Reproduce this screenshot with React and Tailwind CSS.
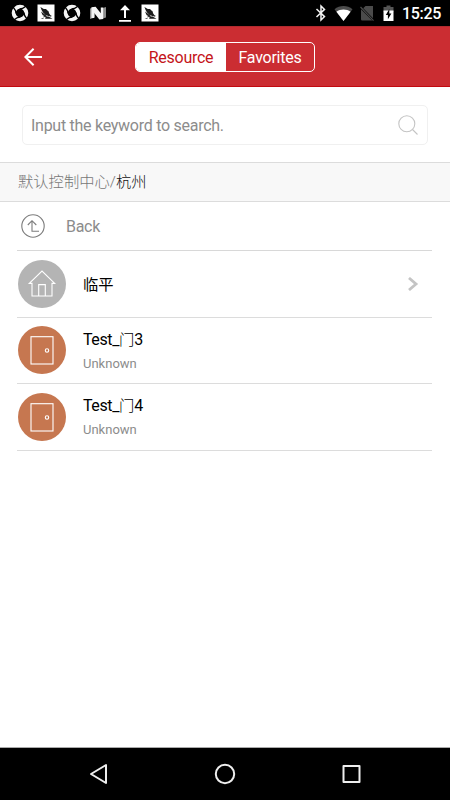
import React, { useState } from 'react';

const SwirlIcon = () => (
    <svg width="18" height="18" viewBox="0 0 18 18">
        <circle cx="9" cy="9" r="6.3" stroke="#f4f4f4" strokeWidth="4" fill="none" />
        <path d="M5 9.5C5 6 3.8 5 2 3M8.5 5C12 5 13 3.8 15 2M13 8.5C13 12 14.2 13 16 15M9.5 13C6 13 5 14.2 3 16" stroke="#000" strokeWidth="1.3" fill="none" />
    </svg>
);

const BirdIcon = () => (
    <svg width="18" height="18" viewBox="0 0 18 18">
        <rect x="0.5" y="0.5" width="17" height="17" fill="#fff" />
        <path d="m3.4 3 3.4 2L9 5l1.4 1.6 1 .5.8 2.3 1.6 2.4-1.6.4L8.6 11 6 8.4 4.6 6ZM4 7.4l2.6 2.2L10 12.2l-2 .2-2.6-1.6ZM5.4 11.8l6.1.8 4 2.2H8l.8-1.2ZM3.6 14.4l4-.9-1.6 1.3Z" fill="#1c1c1c" />
        <path d="m12.4 10.8 2.6 1.2-2 .8Z" fill="#333" />
    </svg>
);

const NougatIcon = () => (
    <svg width="18" height="18" viewBox="0 0 18 18">
        <path d="M1 4.5 6 3v10.5L1 15ZM12 4.5 17 3v10.5L12 15Z" fill="#8c8c8c" />
        <path d="M2.4 3.2 6.6 2.8l5.2 6.4V3.6h2.4V15l-3.8.4L5 8.8V14H2.4Z" fill="#f4f4f4" />
    </svg>
);

const UploadIcon = () => (
    <svg width="18" height="18" viewBox="0 0 18 18">
        <path d="M10 1 15 6.3h-4V14H9V6.3H5ZM4 16h12v1.7H4Z" fill="#fff" />
    </svg>
);

const BluetoothIcon = () => (
    <svg width="12" height="18" viewBox="0 0 12 18">
        <path d="m1.5 5 8 7.6L6 16V2l3.5 3.4-8 7.6" stroke="#f2f2f2" strokeWidth="1.5" fill="none" />
    </svg>
);

const WifiIcon = () => (
    <svg width="19" height="18" viewBox="0 0 19 18">
        <path d="M9.5 17 .5 5.2C5.5.8 13.5.8 18.5 5.2Z" fill="#4b4b4b" />
        <path d="M9.5 17 2.4 7.8c3.8-3.2 10.4-3.2 14.2 0Z" fill="#fff" />
    </svg>
);

const NoSimIcon = () => (
    <svg width="14" height="18" viewBox="0 0 14 18">
        <path d="M5.5 2H13v12.2L3.2 4.2ZM1 5.2 12.2 16.5H2.2Q1 16.5 1 15.3Z" fill="#4b4b4b" />
        <path d="m.5 3 13 13.6" stroke="#4b4b4b" strokeWidth="1.2" />
    </svg>
);

const BatteryIcon = () => (
    <svg width="11" height="18" viewBox="0 0 11 18">
        <path d="M.5 3h3V1.5h4V3h3v5H.5Z" fill="#555" />
        <path d="M.5 6.5h10V17H.5Z" fill="#fff" />
        <path d="M6.3 5 2.8 11h2.1v4.2L8.4 9.4H6.3Z" fill="#000" />
    </svg>
);

const HouseIcon = () => (
    <svg width="48" height="48" viewBox="0 0 48 48" fill="none" stroke="#fff" strokeWidth="1.1">
        <path d="M11.3 23.4 24 11l12.7 12.4H34V36H14V23.4Z" />
        <path d="M20.7 36V24.6h6.6V36" />
    </svg>
);

const DoorIcon = () => (
    <svg width="48" height="48" viewBox="0 0 48 48" fill="none" stroke="#fff" strokeWidth="1.1">
        <rect x="13" y="10.7" width="22" height="27.3" />
        <circle cx="29" cy="24.5" r="1.7" />
    </svg>
);

const StatusBar = () => (
    <div className="flex h-[26px] items-center justify-between bg-black pl-[11px] pr-[9px]">
        <div className="flex gap-2">
            <SwirlIcon />
            <BirdIcon />
            <SwirlIcon />
            <NougatIcon />
            <UploadIcon />
            <BirdIcon />
        </div>
        <div className="flex items-center">
            <BluetoothIcon />
            <span className="ml-[7px]"><WifiIcon /></span>
            <span className="ml-[7px]"><NoSimIcon /></span>
            <span className="ml-[9px]"><BatteryIcon /></span>
            <span className="ml-2 w-[39px] whitespace-nowrap pt-px text-base font-medium leading-[26px] tracking-[-0.3px] text-white">15:25</span>
        </div>
    </div>
);

const items = [
    { id: 1, name: '', suffix: '临平', type: 'area' },
    { id: 2, name: 'Test_', suffix: '门', number: 3, type: 'door', status: 'Unknown' },
    { id: 3, name: 'Test_', suffix: '门', number: 4, type: 'door', status: 'Unknown' },
];

const App = () => {
    const [activeTab, setActiveTab] = useState('resource');

    return (
        <div className="flex h-[800px] w-[450px] flex-col overflow-hidden bg-white font-['Roboto','Noto_Sans_CJK_SC',sans-serif]">
            <StatusBar />

            <header className="flex h-[61px] items-center border-b border-t border-b-[#c20a10] border-t-[#b02a2e] bg-[#cb2d32]">
                <button className="ml-6 w-[111px]">
                    <svg width="19" height="18" viewBox="0 0 19 18" fill="none" stroke="#fff" strokeWidth="2">
                        <path d="M18 9H1.5M9.6.8 1.4 9l8.2 8.2" />
                    </svg>
                </button>
                <div className="flex h-[30px] w-[180px] overflow-hidden rounded-[5px] border border-white text-base leading-[26px] tracking-[-0.25px]">
                    <button
                        onClick={() => setActiveTab('resource')}
                        className={`w-[90px] pt-0.5 ${activeTab === 'resource' ? 'bg-white text-[#c4141a]' : 'text-white'}`}
                    >
                        Resource
                    </button>
                    <button
                        onClick={() => setActiveTab('favorites')}
                        className={`flex-1 pt-0.5 ${activeTab === 'favorites' ? 'bg-white text-[#c4141a]' : 'text-white'}`}
                    >
                        Favorites
                    </button>
                </div>
            </header>

            <div className="h-[75px] px-[22px] pt-[18px]">
                <div className="flex h-10 items-center justify-between rounded-[5px] border border-[#f0f0f0] pl-2 pr-[9px]">
                    <span className="pt-0.5 text-base tracking-[-0.27px] text-[#8c8c8c]">Input the keyword to search.</span>
                    <svg width="20" height="20" viewBox="0 0 20 20" fill="none" stroke="#c4c4c4" strokeWidth="1.1">
                        <circle cx="8.8" cy="8.8" r="8" />
                        <path d="m14.5 14.5 5 5" />
                    </svg>
                </div>
            </div>

            <div className="flex h-10 items-center border-b border-t border-[#dcdcdc] bg-[#f8f8f8] pl-[18px] text-[15.3px] font-light text-[#777]">
                默认控制中心/<span className="text-[#111]">杭州</span>
            </div>

            <main className="flex-1 pl-[17px] pr-[18px]">
                <div className="flex h-[49px] items-center border-b border-[#d8d8d8] pl-1">
                    <svg width="24" height="24" viewBox="0 0 24 24" fill="none" stroke="#7c7c7c" strokeWidth="1.1">
                        <circle cx="12" cy="12" r="11.2" />
                        <path d="M6.8 11 11 6.7l4.3 4.3M11 6.7v10.5h7" />
                    </svg>
                    <span className="ml-[21px] pt-0.5 text-base tracking-[-0.3px] text-[#8c8c8c]">Back</span>
                </div>
                {items.map((item) => (
                    <div key={item.id} className="flex h-[66.5px] items-center border-b border-[#dcdcdc]">
                        <div className={`ml-[0.5px] h-12 w-12 rounded-full ${item.type === 'area' ? 'bg-[#b4b4b4]' : 'bg-[#c67750]'}`}>
                            {item.type === 'area' ? <HouseIcon /> : <DoorIcon />}
                        </div>
                        <div className="ml-[17.5px] flex-1 pt-0.5">
                            <p className="text-base leading-6 tracking-[-0.4px] text-black">
                                {item.name}
                                <span className={item.type === 'area' ? 'text-[15.3px] tracking-normal' : 'text-[15.3px] font-light tracking-normal'}>{item.suffix}</span>
                                {item.number}
                            </p>
                            {item.status && <p className="pt-px text-[13px] leading-[22px] text-[#8c8c8c]">{item.status}</p>}
                        </div>
                        {item.type === 'area' && (
                            <svg className="mr-[13px]" width="12" height="14" viewBox="0 0 12 14" fill="none" stroke="#c4c4c4" strokeWidth="2.8">
                                <path d="m2 1 7 6-7 6" />
                            </svg>
                        )}
                    </div>
                ))}
            </main>

            <nav className="flex h-[53px] items-center border-t border-[#aaa] bg-black pl-[88px]">
                <svg width="20" height="22" viewBox="0 0 20 22" fill="none" stroke="#eee" strokeWidth="2" strokeLinejoin="round">
                    <path d="M18 2v18L3 11Z" />
                </svg>
                <svg className="ml-[106px]" width="22" height="22" viewBox="0 0 22 22" fill="none" stroke="#eee" strokeWidth="2">
                    <circle cx="11" cy="11" r="9.2" />
                </svg>
                <svg className="ml-[105px]" width="20" height="20" viewBox="0 0 20 20" fill="none" stroke="#eee" strokeWidth="2" strokeLinejoin="round">
                    <rect x="2.5" y="2" width="16" height="16" />
                </svg>
            </nav>
        </div>
    );
};

export default App;
